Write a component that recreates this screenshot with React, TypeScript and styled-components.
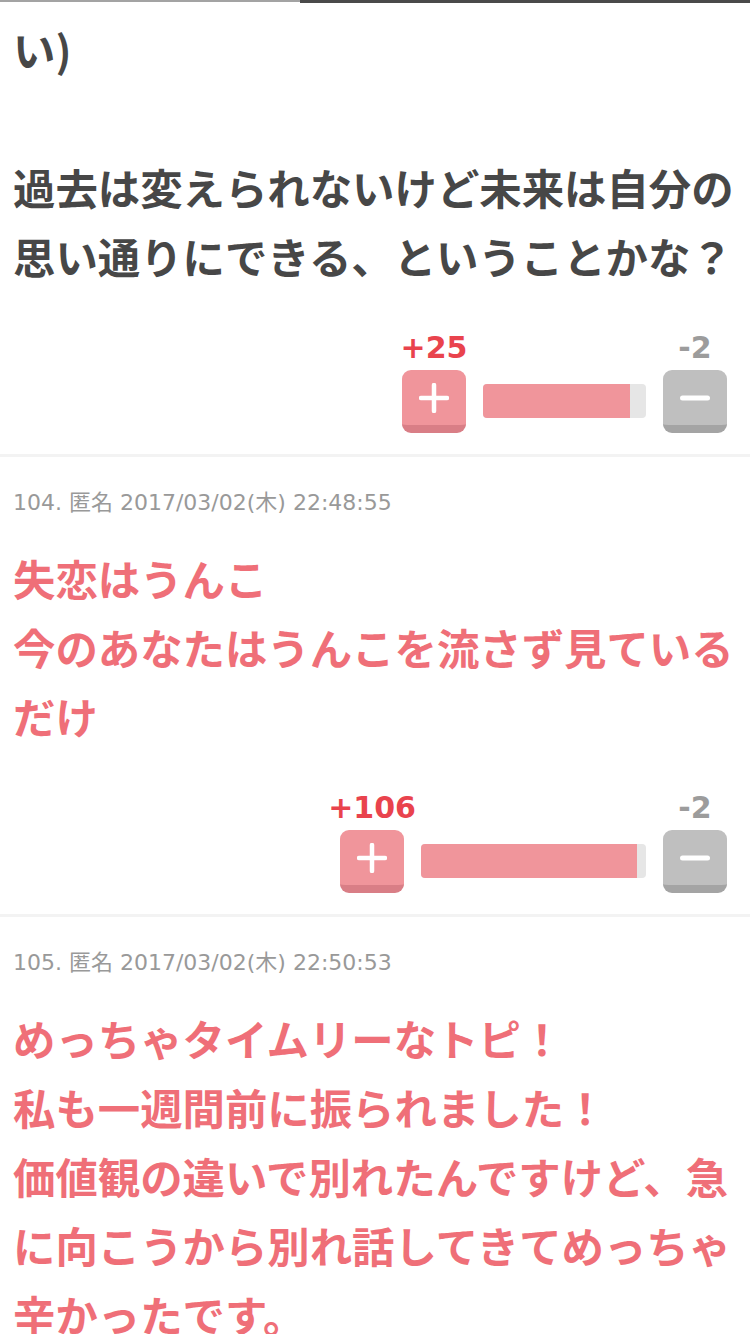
import styled, { createGlobalStyle } from 'styled-components'

const GlobalStyle = createGlobalStyle`
  html, body {
    margin: 0;
    padding: 0;
    background: #fff;
  }
  body {
    font-family: "Noto Sans CJK JP", "Noto Sans", sans-serif;
  }
`

const Progress = styled.div`
  display: flex;
  align-items: flex-start;
  height: 3px;
`
const ProgressDone = styled.div`
  flex: 0 0 300px;
  height: 2px;
  background: #a3a3a3;
`
const ProgressRest = styled.div`
  flex: 1;
  height: 3px;
  background: #4a4a4a;
`

const Comment = styled.article<{ $first?: boolean }>`
  padding: ${(p) => (p.$first ? '11px' : '31px')} 13px 21px;
  border-bottom: 3px solid #f3f3f3;
`

const Meta = styled.div`
  font-family: "DejaVu Sans", "Noto Sans CJK JP", sans-serif;
  font-size: 22px;
  line-height: 30px;
  color: #999;
  margin-bottom: 25px;
`

const Body = styled.div<{ $pink?: boolean }>`
  font-family: "Noto Sans CJK JP", sans-serif;
  font-weight: 700;
  font-size: 42.4px;
  line-height: 69px;
  color: ${(p) => (p.$pink ? '#ef6f78' : '#474747')};
  line-break: strict;
`

const Votes = styled.div`
  display: flex;
  justify-content: flex-end;
  align-items: flex-end;
  gap: 17px;
  margin: 41px 10px 0 0;
`

const VoteCol = styled.div`
  display: flex;
  flex-direction: column;
  align-items: center;
  width: 64px;
  gap: 5px;
`

const VoteCount = styled.span<{ $plus?: boolean }>`
  font-family: "DejaVu Sans", sans-serif;
  font-weight: 700;
  font-size: 30px;
  line-height: 34px;
  white-space: nowrap;
  color: ${(p) => (p.$plus ? '#e9434d' : '#9c9c9c')};
`

const VoteButton = styled.button<{ $plus?: boolean }>`
  display: flex;
  align-items: center;
  justify-content: center;
  width: 64px;
  height: 63px;
  padding: 0;
  border: 0;
  border-radius: 9px;
  background: ${(p) => (p.$plus ? '#f0959b' : '#bfbfbf')};
  border-bottom: 8px solid ${(p) => (p.$plus ? '#d97e86' : '#a4a4a4')};
  box-sizing: border-box;
  cursor: pointer;
`

const Bar = styled.div`
  height: 34px;
  margin-bottom: 15px;
  border-radius: 4px;
  background: #e6e6e6;
  overflow: hidden;
  display: flex;
`

const BarFill = styled.div`
  height: 100%;
  background: #f0959b;
`

type VoteProps = { plus: number; minus: number; barWidth: number; fill: number }

const VoteBox = ({ plus, minus, barWidth, fill }: VoteProps) => (
  <Votes>
    <VoteCol>
      <VoteCount $plus>+{plus}</VoteCount>
      <VoteButton $plus aria-label="plus">
        <svg width="30" height="30" viewBox="0 0 30 30">
          <path d="M15 2v26M2 15h26" stroke="#fff" strokeWidth="4.5" strokeLinecap="round" />
        </svg>
      </VoteButton>
    </VoteCol>
    <Bar style={{ width: barWidth }}>
      <BarFill style={{ width: `${fill}%` }} />
    </Bar>
    <VoteCol>
      <VoteCount>-{minus}</VoteCount>
      <VoteButton aria-label="minus">
        <svg width="30" height="8" viewBox="0 0 30 8">
          <path d="M2.5 4h25" stroke="#fff" strokeWidth="5" strokeLinecap="round" />
        </svg>
      </VoteButton>
    </VoteCol>
  </Votes>
)

export default function App() {
  return (
    <>
      <GlobalStyle />
      <Progress>
        <ProgressDone />
        <ProgressRest />
      </Progress>

      <Comment $first>
        <Body>
          い)
          <br />
          <br />
          過去は変えられないけど未来は自分の思い通りにできる、ということかな？
        </Body>
        <VoteBox plus={25} minus={2} barWidth={163} fill={90} />
      </Comment>

      <Comment>
        <Meta>104. 匿名 2017/03/02(木) 22:48:55</Meta>
        <Body $pink>
          失恋はうんこ
          <br />
          今のあなたはうんこを流さず見ているだけ
        </Body>
        <VoteBox plus={106} minus={2} barWidth={225} fill={96} />
      </Comment>

      <Comment>
        <Meta>105. 匿名 2017/03/02(木) 22:50:53</Meta>
        <Body $pink>
          めっちゃタイムリーなトピ！
          <br />
          私も一週間前に振られました！
          <br />
          価値観の違いで別れたんですけど、急に向こうから別れ話してきてめっちゃ辛かったです。
        </Body>
      </Comment>
    </>
  )
}
